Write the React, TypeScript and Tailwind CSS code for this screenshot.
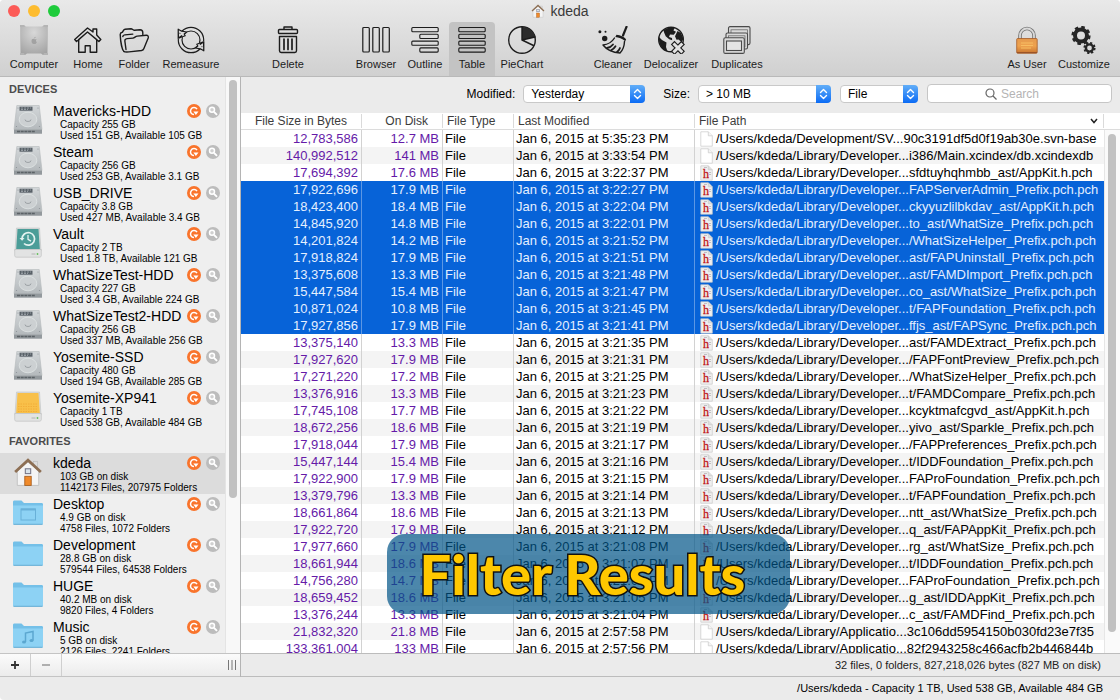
import React from "react";

type IconProps = { className?: string };

const line = { fill: "none", stroke: "#1c1c1c", strokeWidth: 1.4, strokeLinejoin: "round", strokeLinecap: "round" } as const;

function Svg({ children, className = "h-7 w-7" }: { children: React.ReactNode; className?: string }) {
  return (
    <svg viewBox="0 0 28 28" className={className} aria-hidden="true">
      {children}
    </svg>
  );
}

function ComputerIcon() {
  return (
    <svg viewBox="0 0 30 32" className="h-8 w-[30px]" aria-hidden="true">
      <defs>
        <radialGradient id="tower" cx="50%" cy="25%" r="90%">
          <stop offset="0" stopColor="#d8d8d8" />
          <stop offset="1" stopColor="#9c9c9c" />
        </radialGradient>
      </defs>
      <path d="M1 1h4l2 1.5h16L25 1h4v30h-5l-2-1.5H8L6 31H1z" fill="url(#tower)" />
      <path d="M1 1h4l1 2H1zM29 1h-4l-1 2h5zM1 31h5l-1-2H1zM29 31h-5l1-2h4z" fill="#b4b4b4" />
      <path d="M1.5 3v26M28.500 3v26" stroke="#bebebe" strokeWidth="1" />
      <path d="M15 14.500c.2-1 .8-1.600 1.600-1.800 0 1-.6 1.700-1.600 1.800M12.500 17c0-2 1.500-2.500 2.500-2s2-.3 2.700.6c-1 .7-.9 2 .1 2.700-.7 1.700-1.500 2.100-2.600 1.600-1.500.6-2.700-1-2.700-2.900" fill="#a2a2a2" />
    </svg>
  );
}

function HomeIcon() {
  return (
    <Svg>
      <path {...line} d="M13.500 2 0.700 13.500l1.800 2L4.700 13.800V26.300h6.500v-6.500h5v6.500h6.500V13.800l2.200 1.700 1.900-2L22.700 9V3h-3.700v3L13.500 2z" />
      <path {...line} d="M4.700 13.600 13.500 6l9.200 7.600" />
    </Svg>
  );
}

function FolderIcon() {
  return (
    <svg viewBox="0 0 30 28" className="h-7 w-[30px]" aria-hidden="true">
      <path {...line} d="M5 25.500C3 24 1.500 15 1.200 8.500c0-1.500 1-2 2-2.200 1-.5.800-2.800 2.800-3l6-.6c1.500 0 2 1.500 3.500 1.500l5.500-.4c2 0 2.800 1.200 2.800 3v1.700" />
      <path {...line} d="M5 25.500c1 .8 3 .6 5 .4l12.500-1.400c1.200-.2 2-.8 2.400-2L29.200 12c.4-1.800-.4-2.800-2-2.700l-9 .8c-1.700.2-2.700 1.900-4.200 2l-6 .5c-1.600.2-2.300 1.300-2.100 2.700L7 23.500" />
      <path {...line} d="M3.800 10.500c.2-1 1-1.500 2-1.600l8-.8" />
    </svg>
  );
}

function RemeasureIcon() {
  return (
    <Svg>
      <circle {...line} cx="14" cy="14" r="12.700" strokeWidth="1.200" />
      <circle {...line} cx="14" cy="14" r="9" strokeWidth="1.200" />
      <path d="M.3 6.500V12l2 1 5-3z" fill="#dcdcdc" />
      <path d="M27.700 21.500V16l-2-1-5 3z" fill="#d8d8d8" />
      <path {...line} d="M1.200 3.200v9l3.500-2.500M1.200 3.200l3.500 2 5 .8-2.500 2 1 1.700-6.700 2.500z" fill="#dcdcdc" strokeWidth="1.200" />
      <path {...line} d="M26.800 24.800v-9l-3.500 2.500M26.800 24.800l-3.500-2-5-.8 2.500-2-1-1.700 6.700-2.500z" fill="#d8d8d8" strokeWidth="1.200" />
    </Svg>
  );
}

function TrashIcon() {
  return (
    <Svg>
      <rect {...line} x="4.500" y="3.500" width="19" height="4" rx="1" />
      <path {...line} d="M10 3.300V1h8v2.300M5.500 10.500h17v14.300c0 1-.8 1.700-1.700 1.700H7.200c-1 0-1.700-.8-1.700-1.700z" />
      <path {...line} d="M10 13v10.500M14 13v10.500M18 13v10.500" strokeWidth="1.700" />
    </Svg>
  );
}

function BrowserIcon() {
  return (
    <Svg>
      {[0.8, 10.8, 20.8].map((x) => (
        <rect key={x} {...line} x={x} y="1.500" width="6.500" height="24.500" rx="1" strokeWidth="1.200" />
      ))}
    </Svg>
  );
}

function BarsIcon({ short }: { short: boolean }) {
  return (
    <Svg>
      {[1.5, 8.3, 15.1, 21.9].map((y, i) => (
        <rect key={y} {...line} x={short && i % 2 ? 8.8 : 0.8} y={y} width={short && i % 2 ? 18.4 : 26.4} height="4.200" rx="1" strokeWidth="1.100" />
      ))}
    </Svg>
  );
}

function PieIcon() {
  return (
    <svg viewBox="0 0 30 28" className="h-7 w-[30px]" aria-hidden="true">
      <circle {...line} cx="15" cy="14" r="13.300" />
      <path d="M15 14V.7A13.300 13.300 0 0 1 28 11z" fill="#2c2c2c" />
      <path {...line} d="M15 1v13l11.500 5.500M15 14l13-3" />
    </svg>
  );
}

function CleanerIcon() {
  return (
    <svg viewBox="0 0 30 28" className="h-7 w-[30px]" aria-hidden="true">
      <path d="M28.500.8 25 9.500" stroke="#1c1c1c" strokeWidth="2.200" strokeLinecap="round" />
      <path d="M18.500 8.800c4 .5 7.500 2.200 9.600 4.400l-.8 2c-3-2.500-6.500-3.800-10-4.200z" fill="#1c1c1c" />
      <path {...line} d="M16.500 12c-2.500 4-6.500 6.500-11.500 7 3.500 4.500 9.500 7.500 17 8 3-3 4.300-7 4.500-11.500" />
      <path {...line} d="M13 24.300c2-.8 3.300-2 4.500-4M9 22c2.500-.3 4.600-1.700 6-3.500M19 26c1.500-1.200 2.500-2.500 3-4" strokeWidth="1.800" />
      <circle cx="6.700" cy="12.500" r="2.700" fill="#1c1c1c" />
      <circle cx="1.900" cy="5.800" r="1.500" fill="#1c1c1c" />
      <circle cx="7.500" cy="5.800" r="1" fill="#1c1c1c" />
    </svg>
  );
}

function GlobeIcon() {
  return (
    <Svg>
      <circle {...line} cx="14" cy="13.500" r="12.300" />
      <path d="M6.500 4.500C9.500 1.500 14.500.8 17.500 2l-1 2.500L19 5.700l-2.200 3-3.800-.2-1 2.500 3 1 .2 2.300-3-1-3.500-3-1.500-3.500zM2 11l3 3 4.500 2.500-.5 4.500 1.500 4.500C5 24 1.200 18 2 11zM20.500 5 24 7l2.500 6-2 3-3-2.500-2 .2-1.500-3.500z" fill="#1c1c1c" />
      <path d="m17.500 18.500 6.800 6.800M24.300 18.500l-6.800 6.800" stroke="#1c1c1c" strokeWidth="5.200" strokeLinecap="square" />
      <path d="m17.500 18.500 6.800 6.800M24.300 18.500l-6.800 6.800" stroke="#e2e2e2" strokeWidth="3" strokeLinecap="square" />
    </Svg>
  );
}

function DuplicatesIcon() {
  const outer = { fill: "#dadada", stroke: "#4a4a4a", strokeWidth: 1.1 };
  const inner = { fill: "none", stroke: "#6a6a6a", strokeWidth: 0.8 };
  return (
    <Svg>
      <rect {...outer} x="5.500" y=".6" width="21.500" height="18" rx="1.500" />
      <rect {...inner} x="8" y="3.800" width="16.500" height="12" />
      <rect {...outer} x="3" y="7" width="21.500" height="16" rx="1.500" />
      <rect {...inner} x="5.500" y="9.800" width="16.500" height="11" />
      <rect {...outer} x=".8" y="11.800" width="20.500" height="15.600" rx="1.500" />
      <rect {...outer} fill="#e4e4e4" x="3.500" y="15" width="15" height="9.500" />
    </Svg>
  );
}

function LockIcon() {
  return (
    <Svg>
      <defs>
        <linearGradient id="lockBody" x2="0" y2="1">
          <stop offset="0" stopColor="#e59a4e" />
          <stop offset=".5" stopColor="#eea24e" />
          <stop offset="1" stopColor="#c9752f" />
        </linearGradient>
      </defs>
      <path d="M7 14V9.500a7 7 0 0 1 14 0V14" fill="none" stroke="#777" strokeWidth="3.600" />
      <path d="M7 14V9.500a7 7 0 0 1 14 0V14" fill="none" stroke="#d9d9d9" strokeWidth="1.800" />
      <rect x="3.700" y="12.500" width="20.500" height="14.800" rx="1" fill="url(#lockBody)" stroke="#a45c28" strokeWidth=".8" />
      <path d="M8 17h12M8 19.500h12M8 22h10" stroke="#f8bd62" strokeWidth="1" />
      <path d="M4 26.500h20" stroke="#9c5427" strokeWidth="1.200" />
    </Svg>
  );
}

function GearsIcon() {
  const g = { fill: "none", stroke: "#262626" };
  return (
    <Svg>
      <circle {...g} cx="11" cy="9.500" r="6" strokeWidth="4" />
      <circle {...g} cx="11" cy="9.500" r="8.300" strokeWidth="2.600" strokeDasharray="3.500 3.020" />
      <circle {...g} cx="19.500" cy="22" r="3.600" strokeWidth="2.400" />
      <circle {...g} cx="19.500" cy="22" r="5.200" strokeWidth="1.800" strokeDasharray="2.200 1.880" />
    </Svg>
  );
}

function HouseIcon({ className }: IconProps) {
  return (
    <svg viewBox="0 0 28 28" className={className} aria-hidden="true">
      <rect x="19" y="4" width="4" height="7" fill="#ddd" stroke="#bbb" strokeWidth=".6" />
      <path d="M4 13 14 4.500 24 13v13.500H4z" fill="#f4f4f4" stroke="#bdbdbd" strokeWidth=".8" />
      <path d="M2 14 14 3l12 11" fill="none" stroke="#8d6f54" strokeWidth="2.600" />
      <rect x="11.500" y="11" width="5" height="4.500" fill="#d9e3ea" stroke="#778" strokeWidth="1" />
      <rect x="11" y="18" width="6" height="8.500" fill="#f08a2a" stroke="#a55b1b" strokeWidth=".8" />
    </svg>
  );
}

function HddIcon() {
  return (
    <svg viewBox="0 0 30 32" className="h-8 w-[30px]" aria-hidden="true">
      <defs>
        <linearGradient id="hdd" x2="0" y2="1">
          <stop offset="0" stopColor="#d3d7d9" />
          <stop offset="1" stopColor="#b4b9bc" />
        </linearGradient>
      </defs>
      <path d="M3.800 1.500h22.400L29 25.500H1z" fill="url(#hdd)" stroke="#b4b9bb" strokeWidth=".6" />
      <ellipse cx="15" cy="15.500" rx="8.800" ry="7.300" fill="#ccd0d2" stroke="#e0e4e5" strokeWidth=".8" />
      <path d="M12 15.500a3 2 0 0 0 6 0" fill="none" stroke="#979da0" strokeWidth=".9" />
      <rect x="6.500" y="2.700" width="13" height="4" fill="#596168" />
      <path d="M8 4h10M8 5.500h7" stroke="#aeb5ba" strokeWidth=".7" strokeDasharray="2 1" />
      <path d="M1 25.500h28v4.200H1z" fill="#93999d" />
      <path d="M4 27.500h18" stroke="#5b6266" strokeWidth="1.500" strokeDasharray="3 .7" />
      <g fill="#8c9296"><circle cx="5" cy="4" r=".6" /><circle cx="25" cy="4" r=".6" /><circle cx="3.500" cy="22.500" r=".6" /><circle cx="26.500" cy="22.500" r=".6" /></g>
    </svg>
  );
}

function ExternalIcon({ vault }: { vault: boolean }) {
  return (
    <svg viewBox="0 0 30 32" className="h-8 w-[30px]" aria-hidden="true">
      <path d="M3.500 1h23L28 24H2z" fill="#d9dbdb" stroke="#bfc3c3" strokeWidth=".6" />
      <path d="M4.500 2h21l1.300 20H3.200z" fill={vault ? "#4b9d98" : "#f8c04a"} />
      <path d="M1.700 22.500h26.600v6c0 1-.7 1.700-1.700 1.700H3.400c-1 0-1.700-.7-1.700-1.700z" fill="#e2e3e3" stroke="#b8baba" strokeWidth=".6" />
      <path d="M18.500 27h4" stroke="#b4b4b4" strokeWidth="1" />
      <circle cx="24.500" cy="27" r=".9" fill="#64bf5a" />
      {vault ? (
        <g fill="none" stroke="#e4f3f1" strokeWidth="1.700">
          <path d="M9 12a6.300 6.300 0 1 1 2 4.500" />
          <path d="M15 8v4.300l3 1.800" strokeWidth="1.300" />
          <path d="m6.500 11 2.600 2.800 2.400-2.800z" fill="#e4f3f1" stroke="none" />
        </g>
      ) : (
        <path d="M5 13h20M5 15.500h20M5 18h20M5 20.500h20" stroke="#f0a836" strokeWidth=".8" strokeDasharray="1.500 1" />
      )}
    </svg>
  );
}

function BlueFolder({ mark }: { mark: string }) {
  return (
    <svg viewBox="0 0 30 32" className="h-8 w-[30px]" aria-hidden="true">
      <path d="M0 5c0-1 .6-1.500 1.500-1.500h7L11 6h17.500c1 0 1.500.5 1.500 1.500V26H0z" fill="#74c0e8" />
      <path d="M0 8.500h30V26.500c0 .8-.5 1.200-1.200 1.200H1.200c-.7 0-1.200-.4-1.200-1.200z" fill="#8dd2f4" />
      <path d="M.5 27.300h29" stroke="#62a9cf" strokeWidth=".9" />
      {mark === "desktop" && (
        <>
          <rect x="8" y="12" width="14.500" height="11" fill="none" stroke="#68b0d8" strokeWidth="1" />
          <path d="M8 12.500h14.500" stroke="#68b0d8" strokeWidth="2" />
        </>
      )}
      {mark === "music" && (
        <>
          <path d="M12.500 22v-9l7.500-1.500v9" fill="none" stroke="#5ba7d0" strokeWidth="1.500" />
          <ellipse cx="11" cy="22" rx="2" ry="1.500" fill="#5ba7d0" />
          <ellipse cx="18.500" cy="20.500" rx="2" ry="1.500" fill="#5ba7d0" />
        </>
      )}
    </svg>
  );
}

function PlaceIcon({ kind }: { kind: string }) {
  if (kind === "hdd") return <HddIcon />;
  if (kind === "vault" || kind === "usb") return <ExternalIcon vault={kind === "vault"} />;
  if (kind === "home") return <HouseIcon className="h-8 w-[30px]" />;
  return <BlueFolder mark={kind} />;
}

type Place = [kind: string, name: string, first: string, second: string];

const devices: Place[] = [
  ["hdd", "Mavericks-HDD", "Capacity 255 GB", "Used 151 GB, Available 105 GB"],
  ["hdd", "Steam", "Capacity 256 GB", "Used 253 GB, Available 3.1 GB"],
  ["hdd", "USB_DRIVE", "Capacity 3.8 GB", "Used 427 MB, Available 3.4 GB"],
  ["vault", "Vault", "Capacity 2 TB", "Used 1.8 TB, Available 121 GB"],
  ["hdd", "WhatSizeTest-HDD", "Capacity 227 GB", "Used 3.4 GB, Available 224 GB"],
  ["hdd", "WhatSizeTest2-HDD", "Capacity 256 GB", "Used 337 MB, Available 256 GB"],
  ["hdd", "Yosemite-SSD", "Capacity 480 GB", "Used 194 GB, Available 285 GB"],
  ["usb", "Yosemite-XP941", "Capacity 1 TB", "Used 538 GB, Available 484 GB"],
];

const favorites: Place[] = [
  ["home", "kdeda", "103 GB on disk", "1142173 Files, 207975 Folders"],
  ["desktop", "Desktop", "4.9 GB on disk", "4758 Files, 1072 Folders"],
  ["folder", "Development", "28.8 GB on disk", "579544 Files, 64538 Folders"],
  ["folder", "HUGE", "40.2 MB on disk", "9820 Files, 4 Folders"],
  ["music", "Music", "5 GB on disk", "2126 Files, 2241 Folders"],
];

type Row = [bytes: string, disk: string, time: string, path: string];

const dev = "/Users/kdeda/Library/Developer...";
const app = "/Users/kdeda/Library/Applicatio...";

const rows: Row[] = [
  ["12,783,586", "12.7 MB", "5:35:23", "/Users/kdeda/Development/SV...90c3191df5d0f19ab30e.svn-base"],
  ["140,992,512", "141 MB", "3:33:54", dev + "i386/Main.xcindex/db.xcindexdb"],
  ["17,694,392", "17.6 MB", "3:22:37", dev + "sfdtuyhqhmbb_ast/AppKit.h.pch"],
  ["17,922,696", "17.9 MB", "3:22:27", dev + "FAPServerAdmin_Prefix.pch.pch"],
  ["18,423,400", "18.4 MB", "3:22:04", dev + "ckyyuzlilbkdav_ast/AppKit.h.pch"],
  ["14,845,920", "14.8 MB", "3:22:01", dev + "to_ast/WhatSize_Prefix.pch.pch"],
  ["14,201,824", "14.2 MB", "3:21:52", dev + "/WhatSizeHelper_Prefix.pch.pch"],
  ["17,918,824", "17.9 MB", "3:21:51", dev + "ast/FAPUninstall_Prefix.pch.pch"],
  ["13,375,608", "13.3 MB", "3:21:48", dev + "ast/FAMDImport_Prefix.pch.pch"],
  ["15,447,584", "15.4 MB", "3:21:47", dev + "co_ast/WhatSize_Prefix.pch.pch"],
  ["10,871,024", "10.8 MB", "3:21:45", dev + "t/FAPFoundation_Prefix.pch.pch"],
  ["17,927,856", "17.9 MB", "3:21:41", dev + "ffjs_ast/FAPSync_Prefix.pch.pch"],
  ["13,375,140", "13.3 MB", "3:21:35", dev + "ast/FAMDExtract_Prefix.pch.pch"],
  ["17,927,620", "17.9 MB", "3:21:31", dev + "/FAPFontPreview_Prefix.pch.pch"],
  ["17,271,220", "17.2 MB", "3:21:25", dev + "/WhatSizeHelper_Prefix.pch.pch"],
  ["13,376,916", "13.3 MB", "3:21:23", dev + "t/FAMDCompare_Prefix.pch.pch"],
  ["17,745,108", "17.7 MB", "3:21:22", dev + "kcyktmafcgvd_ast/AppKit.h.pch"],
  ["18,672,256", "18.6 MB", "3:21:19", dev + "yivo_ast/Sparkle_Prefix.pch.pch"],
  ["17,918,044", "17.9 MB", "3:21:17", dev + "/FAPPreferences_Prefix.pch.pch"],
  ["15,447,144", "15.4 MB", "3:21:16", dev + "t/IDDFoundation_Prefix.pch.pch"],
  ["17,922,900", "17.9 MB", "3:21:15", dev + "FAProFoundation_Prefix.pch.pch"],
  ["13,379,796", "13.3 MB", "3:21:14", dev + "t/FAPFoundation_Prefix.pch.pch"],
  ["18,661,864", "18.6 MB", "3:21:13", dev + "ntt_ast/WhatSize_Prefix.pch.pch"],
  ["17,922,720", "17.9 MB", "3:21:12", dev + "q_ast/FAPAppKit_Prefix.pch.pch"],
  ["17,977,660", "17.9 MB", "3:21:08", dev + "rg_ast/WhatSize_Prefix.pch.pch"],
  ["18,661,944", "18.6 MB", "3:21:07", dev + "t/IDDFoundation_Prefix.pch.pch"],
  ["14,756,280", "14.7 MB", "3:21:06", dev + "FAProFoundation_Prefix.pch.pch"],
  ["18,659,452", "18.6 MB", "3:21:05", dev + "g_ast/IDDAppKit_Prefix.pch.pch"],
  ["13,376,244", "13.3 MB", "3:21:04", dev + "c_ast/FAMDFind_Prefix.pch.pch"],
  ["21,832,320", "21.8 MB", "2:57:58", app + "3c106dd5954150b030fd23e7f35"],
  ["133,361,004", "133 MB", "2:57:56", app + "82f2943258c466acfb2b446844b"],
];

function PlaceRow({ place, active = false }: { place: Place; active?: boolean }) {
  const [kind, name, first, second] = place;
  return (
    <li className={`flex h-[41px] shrink-0 pl-[13px] pr-[5px] ${active ? "bg-[#dcdcdc]" : ""}`}>
      <span className="mt-[3px] shrink-0">
        <PlaceIcon kind={kind} />
      </span>
      <div className="min-w-0 flex-1 whitespace-nowrap pl-[10px] pt-[2px]">
        <div className="flex items-center justify-between">
          <span className="text-[14px] leading-4">{name}</span>
          <span className="flex items-center gap-[5px]">
            <button aria-label={`Remeasure ${name}`} className="h-[14px] w-[14px]">
              <svg viewBox="0 0 14 14" className="h-[14px] w-[14px]">
                <circle cx="7" cy="7" r="7" fill="#f9742c" />
                <path d="M10 5.200A3.500 3.500 0 1 0 7 10.500" fill="none" stroke="#fff" strokeWidth="1.500" />
                <path d="M6.300 7.500h5.200l-2.600 3.500z" fill="#fff" />
              </svg>
            </button>
            <button aria-label={`Reveal ${name}`} className="h-[14px] w-[14px]">
              <svg viewBox="0 0 14 14" className="h-[14px] w-[14px]">
                <circle cx="7" cy="7" r="7" fill="#bcbcbc" />
                <circle cx="6" cy="5.800" r="2.500" fill="#d0d0d0" stroke="#fff" strokeWidth="1.500" />
                <path d="m8 7.900 3 3" stroke="#fff" strokeWidth="1.900" />
              </svg>
            </button>
          </span>
        </div>
        <p className="pl-[7px] text-[10px] leading-[11px]">{first}</p>
        <p className="pl-[7px] text-[10px] leading-[11px]">{second}</p>
      </div>
    </li>
  );
}

function Tool({ label, width, icon, active = false }: { label: string; width: string; icon: React.ReactNode; active?: boolean }) {
  return (
    <button className={`flex h-full shrink-0 flex-col items-center pb-[5px] ${width} ${active ? "rounded-t-sm bg-[#c3c3c3]" : ""}`}>
      <span className="flex h-9 items-center">{icon}</span>
      <span className="whitespace-nowrap text-[11px] leading-[13px]">{label}</span>
    </button>
  );
}

function Popup({ label, value, width }: { label: string; value: string; width: string }) {
  return (
    <span className={`relative flex h-[18px] ${width}`}>
      <select aria-label={label} defaultValue={value} className="h-full w-full appearance-none rounded-[4px] border border-[#c9c9c9] bg-white pl-[7px] text-[12px] leading-4 text-black">
        <option>{value}</option>
      </select>
      <svg viewBox="0 0 15 18" className="pointer-events-none absolute right-0 top-0 h-[18px] w-[15px]" aria-hidden="true">
        <defs>
          <linearGradient id="step" x2="0" y2="1">
            <stop offset="0" stopColor="#62aef8" />
            <stop offset="1" stopColor="#0b6bf5" />
          </linearGradient>
        </defs>
        <path d="M0 0h11a4 4 0 0 1 4 4v10a4 4 0 0 1-4 4H0z" fill="url(#step)" />
        <path d="m4.500 7.500 3-3 3 3M4.500 10.500l3 3 3-3" fill="none" stroke="#fff" strokeWidth="1.400" strokeLinecap="round" strokeLinejoin="round" />
      </svg>
    </span>
  );
}

function FileIcon({ header }: { header: boolean }) {
  return (
    <svg viewBox="0 0 13 16" className="h-4 w-[13px] shrink-0" aria-hidden="true">
      <path d="M.8.8h7.500l4 4v10.400H.8z" fill={header ? "#f0f0f0" : "#fff"} stroke="#c9c9c9" strokeWidth=".7" />
      <path d="M8.300.8v4h4" fill={header ? "#ddd" : "#f4f4f4"} stroke="#c9c9c9" strokeWidth=".7" />
      {header && (
        <>
          <path d="M4 2.500h3M9 7.500h2M9 9.500h2" stroke="#aaa" strokeWidth=".7" />
          <text x="3" y="13" fontSize="12" fill="#c0181d" stroke="#c0181d" strokeWidth=".3" fontFamily="Liberation Serif, serif">
            h
          </text>
        </>
      )}
    </svg>
  );
}

function HeadCell({ children }: { children: React.ReactNode }) {
  return (
    <th scope="col" className="h-[17px] border-b border-[#dcdcdc] p-0 font-normal">
      <div className="flex h-[14px] items-center justify-between border-r border-[#dadada] pl-1">{children}</div>
    </th>
  );
}

export default function App() {
  return (
    <div className="relative flex h-screen flex-col overflow-hidden rounded-[4px] bg-[#ebebeb] font-['Liberation_Sans',Arial,sans-serif] text-[13px] text-black">
      <header className="flex h-[77px] shrink-0 flex-col border-b border-[#b9b9b9] bg-linear-to-b from-[#e9e9e9] to-[#d0d0d0] text-[#1c1c1c]">
        <div className="grid h-[22px] grid-cols-[1fr_auto_1fr] items-center">
          <div className="flex gap-2 pl-2">
            <button aria-label="Close" className="h-3 w-3 rounded-full bg-[#fc5b57]" />
            <button aria-label="Minimize" className="h-3 w-3 rounded-full bg-[#fdbc2f]" />
            <button aria-label="Zoom" className="h-3 w-3 rounded-full bg-[#1ecb3b]" />
          </div>
          <h1 className="flex items-center gap-[5px] text-[14px] leading-4 text-[#3a3a3a]">
            <HouseIcon className="h-[14px] w-[14px]" />
            kdeda
          </h1>
        </div>
        <nav className="flex h-[54px] px-[6px]" aria-label="Toolbar">
          <Tool label="Computer" width="w-14" icon={<ComputerIcon />} />
          <Tool label="Home" width="w-[52px]" icon={<HomeIcon />} />
          <Tool label="Folder" width="w-10" icon={<FolderIcon />} />
          <Tool label="Remeasure" width="w-[74px]" icon={<RemeasureIcon />} />
          <Tool label="Delete" width="ml-[30px] w-[60px]" icon={<TrashIcon />} />
          <Tool label="Browser" width="ml-[33px] w-[50px]" icon={<BrowserIcon />} />
          <Tool label="Outline" width="w-12" icon={<BarsIcon short />} />
          <Tool label="Table" width="w-[46px]" icon={<BarsIcon short={false} />} active />
          <Tool label="PieChart" width="w-[54px]" icon={<PieIcon />} />
          <Tool label="Cleaner" width="ml-[39px] w-[50px]" icon={<CleanerIcon />} />
          <Tool label="Delocalizer" width="w-[66px]" icon={<GlobeIcon />} />
          <Tool label="Duplicates" width="w-[66px]" icon={<DuplicatesIcon />} />
          <Tool label="As User" width="ml-auto w-[54px]" icon={<LockIcon />} />
          <Tool label="Customize" width="w-[60px]" icon={<GearsIcon />} />
        </nav>
      </header>

      <div className="flex min-h-0 flex-1">
        <aside className="flex w-[241px] shrink-0 flex-col border-r border-[#b4b4b4]">
          <div className="flex min-h-0 flex-1">
            <div className="min-w-0 flex-1 overflow-hidden bg-[#efefef]">
              <h2 className="h-6 pl-[9px] text-[11px] font-bold leading-6 text-[#4c4c4c]">DEVICES</h2>
              <ul>
                {devices.map((p) => (
                  <PlaceRow key={p[1]} place={p} />
                ))}
              </ul>
              <h2 className="h-6 pl-[9px] text-[11px] font-bold leading-6 text-[#4c4c4c]">FAVORITES</h2>
              <ul>
                {favorites.map((p, i) => (
                  <PlaceRow key={p[1]} place={p} active={i === 0} />
                ))}
              </ul>
            </div>
            <div className="w-[15px] shrink-0 border-l border-[#e4e4e4] bg-[#f8f8f8] px-[3px] pt-[3px]">
              <div className="h-[73%] rounded-full bg-[#c1c1c1]" />
            </div>
          </div>
          <div className="flex h-6 shrink-0 items-stretch border-y border-[#c4c4c4] bg-linear-to-b from-[#fbfbfb] to-[#ececec]">
            <button aria-label="Add" className="flex w-[31px] items-center justify-center border-r border-[#cfcfcf]">
              <svg viewBox="0 0 8 8" className="h-2 w-2"><path d="M4 0v8M0 4h8" stroke="#333" strokeWidth="1.800" /></svg>
            </button>
            <button aria-label="Remove" className="flex w-[31px] items-center justify-center border-r border-[#cfcfcf]">
              <svg viewBox="0 0 8 8" className="h-2 w-2"><path d="M0 4h8" stroke="#999" strokeWidth="1.500" /></svg>
            </button>
            <svg viewBox="0 0 8 10" className="my-auto ml-auto mr-1 h-[10px] w-2" aria-hidden="true">
              <path d="M.5 0v10M4 0v10M7.500 0v10" stroke="#777" strokeWidth="1" />
            </svg>
          </div>
        </aside>

        <main className="flex min-w-0 flex-1 flex-col">
          <form className="flex h-9 shrink-0 items-center justify-end pb-[3px] pr-2 text-[12px]">
            <span className="mr-2">Modified:</span>
            <Popup label="Modified" value="Yesterday" width="w-[122px]" />
            <span className="ml-[18px] mr-2">Size:</span>
            <Popup label="Size" value="> 10 MB" width="w-[133px]" />
            <span className="ml-[9px] flex">
              <Popup label="Kind" value="File" width="w-[78px]" />
            </span>
            <label className="ml-[9px] flex h-[19px] w-[185px] items-center rounded-[4px] border border-[#c6c6c6] bg-white pl-[57px]">
              <svg viewBox="0 0 12 12" className="h-3 w-3 shrink-0" aria-hidden="true">
                <circle cx="5" cy="5" r="4" fill="none" stroke="#666" strokeWidth="1.200" />
                <path d="m8 8 3.500 3.500" stroke="#666" strokeWidth="1.300" />
              </svg>
              <input type="search" aria-label="Search" placeholder="Search" className="ml-1 w-full min-w-0 bg-transparent text-[12px] leading-4 outline-none placeholder:text-[#b4b4b4]" />
            </label>
          </form>

          <div className="flex min-h-0 flex-1 overflow-hidden bg-white">
            <div className="min-w-0 flex-1 overflow-hidden">
              <table className="w-full table-fixed border-separate border-spacing-0 whitespace-nowrap">
                <colgroup>
                  <col className="w-[121px]" />
                  <col className="w-[81px]" />
                  <col className="w-[71px]" />
                  <col className="w-[181px]" />
                  <col />
                </colgroup>
                <thead>
                  <tr className="text-left text-[12px] leading-[14px] text-[#3c3c3c]">
                    <HeadCell><span className="ml-auto pr-[14px]">File Size in Bytes</span></HeadCell>
                    <HeadCell><span className="ml-auto pr-[14px]">On Disk</span></HeadCell>
                    <HeadCell>File Type</HeadCell>
                    <HeadCell>Last Modified</HeadCell>
                    <HeadCell>
                      File Path
                      <svg viewBox="0 0 8 6" className="mr-[5px] h-[6px] w-2" aria-hidden="true">
                        <path d="m1 1 3 3.500L7 1" fill="none" stroke="#222" strokeWidth="1.500" />
                      </svg>
                    </HeadCell>
                  </tr>
                </thead>
                <tbody>
                  {rows.map(([bytes, disk, time, path], i) => {
                    const picked = i > 2 && i < 12;
                    const tone = picked ? "bg-[#0763d8] text-[#e4efff]" : i % 2 ? "bg-[#f4f4f4]" : "bg-white";
                    const edge = picked ? "border-[#5c97e4]" : "border-[#d2d2d2]";
                    const num = picked ? "" : "text-[#651aa8]";
                    return (
                      <tr key={i} className={`leading-[17px] ${tone}`}>
                        <td className={`h-[17px] border-r p-0 pr-[3px] text-right ${edge} ${num}`}>{bytes}</td>
                        <td className={`h-[17px] border-r p-0 pr-[3px] text-right ${edge} ${num}`}>{disk}</td>
                        <td className={`h-[17px] border-r p-0 pl-[2px] ${edge}`}>File</td>
                        <td className={`h-[17px] border-r p-0 pl-[2px] ${edge}`}>Jan 6, 2015 at {time} PM</td>
                        <td className="h-[17px] overflow-hidden p-0">
                          <div className="flex h-[17px] items-center gap-[3px] pl-[5px]">
                            <FileIcon header={i > 1 && i < 29} />
                            {path}
                          </div>
                        </td>
                      </tr>
                    );
                  })}
                </tbody>
              </table>
            </div>
            <div className="flex w-4 shrink-0 flex-col">
              <div className="h-[17px] border-b border-[#dcdcdc]" />
              <div className="flex-1 border-l border-[#e6e6e6] bg-[#fafafa] pl-[3px] pr-1 pt-1">
                <div className="h-[96%] rounded-full bg-[#c1c1c1]" />
              </div>
            </div>
          </div>

          <div className="flex h-6 shrink-0 items-center justify-end border-y border-[#bcbcbc] pr-[19px] text-[11px] text-[#222]">
            32 files, 0 folders, 827,218,026 bytes (827 MB on disk)
          </div>
        </main>
      </div>

      <footer className="flex h-[23px] shrink-0 items-center justify-end pr-[17px] text-[11px]">
        /Users/kdeda - Capacity 1 TB, Used 538 GB, Available 484 GB
      </footer>

      <div className="absolute bottom-[86px] left-[387px] flex h-20 w-[403px] items-center justify-center rounded-[18px] bg-[#005487]/70 pr-3">
        <p className="whitespace-nowrap font-['Lato',sans-serif] text-[56px] font-black leading-[64px] text-[#ffc800] [-webkit-text-stroke:3px_#111] [paint-order:stroke_fill]">
          Filter Results
        </p>
      </div>
    </div>
  );
}
